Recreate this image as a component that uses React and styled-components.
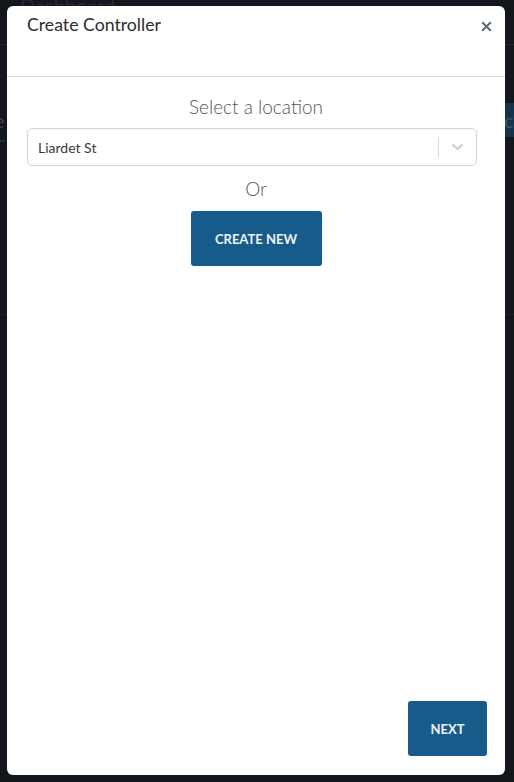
import React from "react";
import styled, { createGlobalStyle } from "styled-components";

const Global = createGlobalStyle`
  html, body { margin: 0; padding: 0; }
  body {
    background: #13171c;
    font-family: Lato, "Open Sans", "Liberation Sans", sans-serif;
    width: 514px;
    height: 782px;
    overflow: hidden;
  }
  * { box-sizing: border-box; }
`;

const Backdrop = styled.div`
  position: relative;
  width: 514px;
  height: 782px;
  overflow: hidden;
`;

const BgPage = styled.div`
  display: flex;
  flex-direction: column;
  height: 100%;
  color: #3b4046;
`;

const BgHeader = styled.div`
  height: 45px;
  border-bottom: 1px solid #20252b;
  padding: 0 20px;
  font-size: 20px;
  line-height: 10px;
  color: #23282d;
`;

const BgRow = styled.div`
  display: flex;
  justify-content: space-between;
  align-items: center;
  height: 270px;
  border-bottom: 1px solid #1c2126;
`;

const BgLeft = styled.div`
  font-size: 20px;
  color: #3c4247;
  margin-top: -110px;
  margin-left: -6px;
  border-bottom: 2px solid #17324a;
  padding-bottom: 8px;
`;

const BgChip = styled.div`
  background: #14334c;
  color: #3f5668;
  height: 34px;
  width: 40px;
  margin-right: -30px;
  margin-top: -120px;
  font-size: 20px;
  line-height: 34px;
`;

const Modal = styled.div`
  position: absolute;
  left: 7px;
  top: 6px;
  width: 498px;
  height: 769px;
  background: #fff;
  border-radius: 6px;
  display: flex;
  flex-direction: column;
`;

const Header = styled.div`
  height: 71px;
  border-bottom: 1px solid #dadde1;
  padding: 8px 12px 0 20px;
  display: flex;
  justify-content: space-between;
  align-items: flex-start;
`;

const Title = styled.h4`
  margin: 0;
  font-size: 17.7px;
  font-weight: 400;
  line-height: 22px;
  color: #2e2e2e;
`;

const Close = styled.button`
  border: 0;
  background: transparent;
  padding: 0;
  margin-top: 5px;
  width: 14px;
  height: 14px;
  display: flex;
  align-items: center;
  justify-content: center;
  cursor: pointer;
`;

const Body = styled.div`
  flex: 1;
  padding: 16px 28px 0 20px;
  display: flex;
  flex-direction: column;
  align-items: center;
`;

const Label = styled.div`
  font-size: 19px;
  font-weight: 300;
  color: #555;
  line-height: 28px;
  margin-left: 8px;
`;

const Select = styled.div`
  align-self: stretch;
  margin-top: 7px;
  height: 38px;
  border: 1px solid #cfd3d8;
  border-radius: 5px;
  display: flex;
  align-items: center;
  padding-left: 10px;
`;

const Value = styled.div`
  flex: 1;
  font-size: 14px;
  color: #3a3a3a;
`;

const Separator = styled.span`
  width: 1px;
  height: 20px;
  background: #d6d9dc;
`;

const Indicator = styled.div`
  width: 37px;
  display: flex;
  justify-content: center;
  align-items: center;
`;

const Or = styled.div`
  margin-top: 9px;
  font-size: 19px;
  font-weight: 300;
  color: #555;
  line-height: 28px;
  margin-left: 8px;
`;

const Button = styled.button`
  border: 0;
  border-radius: 3px;
  background: #175b8b;
  color: #eef3f7;
  font-family: inherit;
  font-size: 13px;
  font-weight: 700;
  text-transform: uppercase;
  height: 55px;
  width: ${(p) => p.$w}px;
  cursor: pointer;
  margin-top: ${(p) => p.$mt || 0}px;
  margin-left: ${(p) => p.$ml || 0}px;
`;

const Footer = styled.div`
  display: flex;
  justify-content: flex-end;
  padding: 0 18px 19px;
`;

export default function App() {
  return (
    <>
      <Global />
      <Backdrop>
        <BgPage>
          <BgHeader>Dashboard</BgHeader>
          <BgRow>
            <BgLeft>e</BgLeft>
            <BgChip>c</BgChip>
          </BgRow>
        </BgPage>
        <Modal>
          <Header>
            <Title>Create Controller</Title>
            <Close aria-label="Close">
              <svg width="11" height="11" viewBox="0 0 11 11">
                <path d="M1.2 1.2 L9.8 9.8 M9.8 1.2 L1.2 9.8" stroke="#5d6b7a" strokeWidth="2.1" strokeLinecap="butt" />
              </svg>
            </Close>
          </Header>
          <Body>
            <Label>Select a location</Label>
            <Select>
              <Value>Liardet St</Value>
              <Separator />
              <Indicator>
                <svg width="13" height="8" viewBox="0 0 13 8">
                  <path d="M1.5 1.5 L6.5 6 L11.5 1.5" fill="none" stroke="#cccccc" strokeWidth="2" />
                </svg>
              </Indicator>
            </Select>
            <Or>Or</Or>
            <Button $w={131} $mt={8} $ml={8}>Create New</Button>
          </Body>
          <Footer>
            <Button $w={79}>Next</Button>
          </Footer>
        </Modal>
      </Backdrop>
    </>
  );
}
